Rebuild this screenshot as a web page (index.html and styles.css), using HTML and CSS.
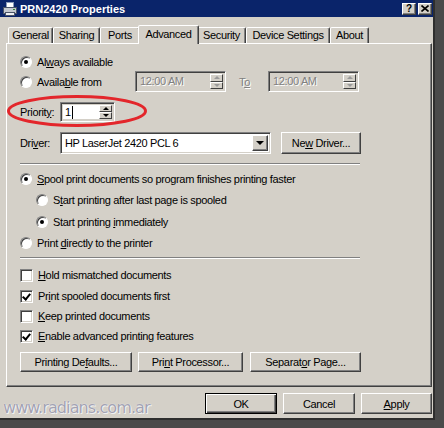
FILE: index.html
```html
<!DOCTYPE html>
<html lang="en">
<head>
  <meta charset="UTF-8" />
  <title>PRN2420 Properties</title>
  <link rel="stylesheet" href="styles.css">
</head>
<body>
  <div class="window">
    <div class="titlebar">
      <svg class="title-icon" width="16" height="16" viewBox="0 0 16 16">
        <rect x="4.5" y="1.5" width="7" height="6" fill="#fff" stroke="#8a9ab8"/>
        <rect x="1.5" y="6.5" width="13" height="6" fill="#c4c8d0" stroke="#4a5468"/>
        <rect x="3.5" y="11.5" width="9" height="3" fill="#eef0f4" stroke="#4a5468"/>
        <rect x="11" y="8" width="2" height="1" fill="#2e8a2e"/>
      </svg>
      <span class="title-text">PRN2420 Properties</span>
      <div class="title-buttons">
        <span class="tbtn">?</span>
        <span class="tbtn">
          <svg width="8" height="7" viewBox="0 0 8 7"><path d="M0.5 0.5L7.5 6.5M7.5 0.5L0.5 6.5" stroke="#000" stroke-width="1.6"/></svg>
        </span>
      </div>
    </div>

    <div class="tabs">
      <div class="tab tab-general">General</div>
      <div class="tab tab-sharing">Sharing</div>
      <div class="tab tab-ports">Ports</div>
      <div class="tab tab-advanced active">Advanced</div>
      <div class="tab tab-security">Security</div>
      <div class="tab tab-device">Device Settings</div>
      <div class="tab tab-about">About</div>
    </div>

    <div class="panel">
      <!-- availability -->
      <div class="row">
        <span class="radio checked"></span>
        <span class="label">Al<u>w</u>ays available</span>
      </div>
      <div class="row row-available">
        <span class="radio"></span>
        <span class="label label-from">Availa<u>b</u>le from</span>
        <div class="field time-field">
          <span class="time-text">12:00 AM</span>
          <div class="spin disabled">
            <span class="spin-btn"><i class="arrow-up"></i></span>
            <span class="spin-btn"><i class="arrow-down"></i></span>
          </div>
        </div>
        <span class="label-to">T<u>o</u></span>
        <div class="field time-field">
          <span class="time-text">12:00 AM</span>
          <div class="spin disabled">
            <span class="spin-btn"><i class="arrow-up"></i></span>
            <span class="spin-btn"><i class="arrow-down"></i></span>
          </div>
        </div>
      </div>

      <!-- priority / driver -->
      <div class="row row-priority">
        <span class="field-label">Priorit<u>y</u>:</span>
        <div class="field priority-field">
          <span class="priority-text">1<i class="caret"></i></span>
          <div class="spin">
            <span class="spin-btn"><i class="arrow-up"></i></span>
            <span class="spin-btn"><i class="arrow-down"></i></span>
          </div>
        </div>
      </div>
      <div class="row row-driver">
        <span class="field-label">Dri<u>v</u>er:</span>
        <div class="field combo">
          <span class="combo-text">HP LaserJet 2420 PCL 6</span>
          <span class="combo-btn"><i class="arrow-down big"></i></span>
        </div>
        <div class="btn btn-newdriver"><span>Ne<u>w</u> Driver...</span></div>
      </div>

      <div class="separator sep-first"></div>

      <!-- spooling -->
      <div class="row row-spool">
        <span class="radio checked"></span>
        <span class="label"><u>S</u>pool print documents so program finishes printing faster</span>
      </div>
      <div class="row row-sub row-sub1">
        <span class="radio"></span>
        <span class="label">S<u>t</u>art printing after last page is spooled</span>
      </div>
      <div class="row row-sub row-sub2">
        <span class="radio checked"></span>
        <span class="label">Start printing <u>i</u>mmediately</span>
      </div>
      <div class="row row-direct">
        <span class="radio"></span>
        <span class="label">Print <u>d</u>irectly to the printer</span>
      </div>

      <div class="separator sep-second"></div>

      <!-- options -->
      <div class="row row-check1">
        <span class="check"></span>
        <span class="label"><u>H</u>old mismatched documents</span>
      </div>
      <div class="row row-check2">
        <span class="check checked"></span>
        <span class="label">Pr<u>i</u>nt spooled documents first</span>
      </div>
      <div class="row row-check3">
        <span class="check"></span>
        <span class="label"><u>K</u>eep printed documents</span>
      </div>
      <div class="row row-check4">
        <span class="check checked"></span>
        <span class="label"><u>E</u>nable advanced printing features</span>
      </div>

      <div class="panel-buttons">
        <div class="btn btn-defaults"><span>Printing De<u>f</u>aults...</span></div>
        <div class="btn btn-processor"><span>Pri<u>n</u>t Processor...</span></div>
        <div class="btn btn-separator"><span>Separat<u>o</u>r Page...</span></div>
      </div>
    </div>

    <div class="dialog-buttons">
      <div class="btn btn-dialog default">OK</div>
      <div class="btn btn-dialog">Cancel</div>
      <div class="btn btn-dialog btn-apply"><span><u>A</u>pply</span></div>
    </div>

    <div class="watermark">www.radians.com.ar</div>

    <svg class="highlight" width="142" height="34" viewBox="0 0 142 34">
      <ellipse cx="71" cy="17" rx="68.5" ry="14.5" fill="none" stroke="#e3262b" stroke-width="3"/>
    </svg>
  </div>
</body>
</html>
```

FILE: styles.css
```css
* {
  box-sizing: border-box;
}

body {
  margin: 0;
  background: #4a4a4a;
  font-family: 'Liberation Sans', Arial, sans-serif;
  font-size: 11px;
  letter-spacing: -0.35px;
  color: #000;
}

u {
  text-decoration: underline;
  text-underline-offset: 1px;
}

.window {
  position: relative;
  width: 435px;
  height: 420px;
  background: #d4d0c8;
  border-right: 2px solid #2e2e2e;
  border-bottom: 2px solid #2e2e2e;
}

/* title bar */
.titlebar {
  height: 17px;
  background: #0a246a;
  display: flex;
  align-items: center;
  padding-left: 2px;
  color: #fff;
}

.title-icon {
  margin-right: 2px;
}

.title-text {
  font-weight: bold;
  letter-spacing: 0;
}

.title-buttons {
  margin-left: auto;
  display: flex;
  gap: 2px;
  padding-right: 1px;
}

.tbtn {
  width: 14px;
  height: 12px;
  background: #d4d0c8;
  border: 1px solid;
  border-color: #fff #404040 #404040 #fff;
  box-shadow: inset -1px -1px #808080;
  color: #000;
  font-weight: bold;
  font-size: 10px;
  display: flex;
  align-items: center;
  justify-content: center;
}

/* tabs */
.tabs {
  height: 26px;
  display: flex;
  align-items: flex-end;
  padding-left: 8px;
}

.tab {
  height: 16px;
  background: #d4d0c8;
  border: 1px solid;
  border-bottom: none;
  border-color: #fff #404040 transparent #fff;
  border-radius: 2px 2px 0 0;
  box-shadow: inset -1px 0 #808080;
  text-align: center;
  line-height: 14px;
  white-space: nowrap;
}

.tab-general { width: 45px; }
.tab-sharing { width: 47px; }
.tab-ports { width: 40px; }
.tab-advanced { width: 57px; }
.tab-security { width: 49px; }
.tab-device { width: 84px; }
.tab-about { width: 39px; }

.tab.active {
  width: 61px;
  height: 19px;
  margin: 0 -2px -1px;
  line-height: 16px;
  position: relative;
  z-index: 1;
}

/* panel */
.panel {
  margin-left: 6px;
  width: 426px;
  height: 344px;
  border: 1px solid;
  border-color: #fff #404040 #404040 #fff;
  box-shadow: inset -1px -1px #808080;
  padding: 11px 0 0 13px;
}

.row {
  display: flex;
  align-items: center;
  height: 14px;
  white-space: nowrap;
}

.row-available { margin-top: 2px; height: 21px; }
.row-priority { margin-top: 10px; height: 20px; }
.row-driver { margin-top: 10px; height: 22px; }
.row-spool { margin-top: 7px; }
.row-sub { padding-left: 16px; }
.row-sub1 { margin-top: 7px; }
.row-sub2 { margin-top: 8px; }
.row-direct { margin-top: 7px; }
.row-check1 { margin-top: 9px; }
.row-check2 { margin-top: 7px; }
.row-check3 { margin-top: 6px; }
.row-check4 { margin-top: 6px; }

.separator {
  width: 340px;
  height: 2px;
  border-top: 1px solid #808080;
  border-bottom: 1px solid #fff;
}

.sep-first { margin-top: 9px; }
.sep-second { margin-top: 7px; }

.label {
  margin-left: 5px;
}

.label-from {
  width: 98px;
}

.label-to {
  width: 42px;
  padding-left: 13px;
  color: #808080;
  text-shadow: 1px 1px #fff;
}

.field-label {
  width: 40px;
}

/* radio & check */
.radio {
  width: 12px;
  height: 12px;
  flex: none;
  border-radius: 50%;
  background: #fff;
  border: 1px solid;
  border-color: #808080 #fff #fff #808080;
  box-shadow: inset 1px 1px #404040;
  display: flex;
  align-items: center;
  justify-content: center;
}

.radio.checked::after {
  content: '';
  width: 4px;
  height: 4px;
  border-radius: 50%;
  background: #000;
}

.check {
  width: 13px;
  height: 13px;
  flex: none;
  background: #fff;
  border: 1px solid;
  border-color: #808080 #fff #fff #808080;
  box-shadow: inset 1px 1px #404040, inset -1px -1px #d4d0c8;
  position: relative;
}

.check.checked::after {
  content: '';
  position: absolute;
  left: 3px;
  top: 1px;
  width: 3px;
  height: 6px;
  border: solid #000;
  border-width: 0 2px 2px 0;
  transform: rotate(40deg);
}

/* fields */
.field {
  display: flex;
  align-items: stretch;
  border: 1px solid;
  border-color: #808080 #fff #fff #808080;
  box-shadow: inset 1px 1px #404040, inset -1px -1px #d4d0c8;
  padding: 2px;
  height: 100%;
}

.time-field {
  width: 91px;
}

.time-text {
  flex: 1;
  padding-left: 2px;
  line-height: 15px;
  color: #808080;
  text-shadow: 1px 1px #fff;
}

.spin {
  width: 13px;
  display: flex;
  flex-direction: column;
}

.spin-btn {
  flex: 1;
  background: #d4d0c8;
  border: 1px solid;
  border-color: #fff #404040 #404040 #fff;
  display: flex;
  align-items: center;
  justify-content: center;
}

.arrow-up {
  border-left: 3px solid transparent;
  border-right: 3px solid transparent;
  border-bottom: 3px solid #000;
}

.arrow-down {
  border-left: 3px solid transparent;
  border-right: 3px solid transparent;
  border-top: 3px solid #000;
}

.arrow-down.big {
  border-left-width: 4px;
  border-right-width: 4px;
  border-top-width: 4px;
}

.spin.disabled .arrow-up {
  border-bottom-color: #9a9a9a;
}

.spin.disabled .arrow-down {
  border-top-color: #9a9a9a;
}

.priority-field {
  width: 55px;
}

.priority-text {
  flex: 1;
  background: #fff;
  padding-left: 2px;
  line-height: 14px;
  display: flex;
  align-items: center;
}

.caret {
  width: 1px;
  height: 13px;
  background: #000;
  margin-left: 1px;
}

.combo {
  width: 211px;
  background: #fff;
}

.combo-text {
  flex: 1;
  padding-left: 2px;
  line-height: 16px;
}

.combo-btn {
  width: 16px;
  background: #d4d0c8;
  border: 1px solid;
  border-color: #fff #404040 #404040 #fff;
  box-shadow: inset -1px -1px #808080;
  display: flex;
  align-items: center;
  justify-content: center;
}

/* buttons */
.btn {
  height: 21px;
  background: #d4d0c8;
  border: 1px solid;
  border-color: #fff #404040 #404040 #fff;
  box-shadow: inset -1px -1px #808080;
  display: flex;
  align-items: center;
  justify-content: center;
  white-space: nowrap;
}

.btn-newdriver {
  width: 80px;
  height: 22px;
  margin-left: 10px;
}

.panel-buttons {
  margin-top: 9px;
  display: flex;
}

.panel-buttons .btn {
  height: 20px;
}

.btn-defaults { width: 112px; }
.btn-processor { width: 105px; margin-left: 6px; }
.btn-separator { width: 111px; margin-left: 7px; }

.dialog-buttons {
  margin-top: 6px;
  display: flex;
  justify-content: flex-end;
  gap: 6px;
  padding-right: 1px;
}

.btn-dialog {
  width: 72px;
}

.btn-apply {
  width: 71px;
}

.btn.default {
  border-color: #000;
  box-shadow: inset 1px 1px #fff, inset -1px -1px #404040, inset -2px -2px #808080;
}

/* overlays */
.watermark {
  position: absolute;
  left: 3px;
  top: 398px;
  font-family: 'DejaVu Sans', Verdana, sans-serif;
  font-size: 16px;
  letter-spacing: -0.9px;
  color: #a2a2b2;
  text-shadow: 0 0 1px #fff, 1px 1px 0 #f0f0f0;
}

.highlight {
  position: absolute;
  left: 6px;
  top: 94px;
}
```
